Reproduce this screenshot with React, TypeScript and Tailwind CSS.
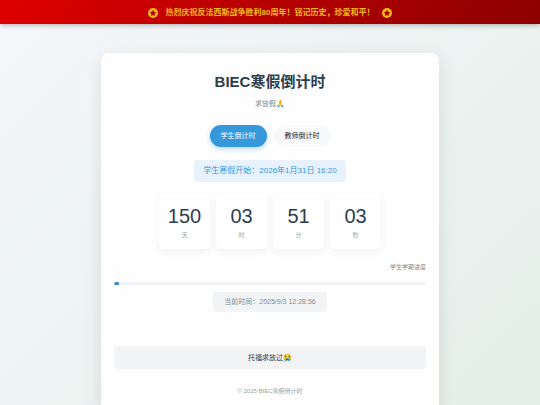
import { useState } from "react";

const TABS = [
  { id: "student", label: "学生倒计时" },
  { id: "teacher", label: "教师倒计时" },
];

const UNITS = [
  { value: "150", label: "天" },
  { value: "03", label: "时" },
  { value: "51", label: "分" },
  { value: "03", label: "秒" },
];

const PROGRESS = 1.5;

function StarBadge() {
  return (
    <svg viewBox="0 0 24 24" className="size-[10px] shrink-0" aria-hidden="true">
      <circle cx="12" cy="12" r="12" fill="#f8b91c" />
      <path
        d="M12 4.2l2.4 5 5.5.7-4 3.8 1 5.5-4.9-2.7-4.9 2.7 1-5.5-4-3.8 5.5-.7z"
        fill="#b00000"
      />
    </svg>
  );
}

function Banner() {
  return (
    <header className="relative flex items-center justify-center gap-2 bg-linear-135 from-[#e00000] to-[#8b0000] pt-[7px] pb-[5px] text-[8px] leading-3 font-bold text-[#f8b91c] shadow-[0_1px_5px_rgba(0,0,0,0.3)]">
      <StarBadge />
      <span>热烈庆祝反法西斯战争胜利80周年！铭记历史，珍爱和平！</span>
      <StarBadge />
    </header>
  );
}

export default function App() {
  const [active, setActive] = useState("student");

  return (
    <div className="min-h-screen bg-linear-135 from-[#f5f7fa] to-[#e4efe9] font-['Liberation_Sans','Noto_Sans_CJK_SC',sans-serif] text-[#2c3e50]">
      <Banner />
      <div className="flex justify-center pt-[29px]">
        <main className="flex w-full max-w-[338px] flex-col items-center rounded-lg bg-[#fefefe] px-[13px] pt-[19px] pb-5 shadow-[0_5px_18px_rgba(0,0,0,0.1)]">
          <h1 className="text-[15px] leading-5 font-bold">BIEC寒假倒计时</h1>
          <p className="mt-[7px] text-[7px] leading-[10px] text-[#7f8c8d]">求放假🙏</p>

          <div className="mt-4 flex gap-[7px]">
            {TABS.map((tab) => (
              <button
                key={tab.id}
                type="button"
                onClick={() => setActive(tab.id)}
                className={
                  active === tab.id
                    ? "h-[22px] rounded-full bg-[#3498db] px-[11px] text-[7px] text-white shadow-[0_2px_5px_rgba(52,152,219,0.35)]"
                    : "h-[22px] rounded-full bg-[#f8f9fa] px-[11px] text-[7px] text-[#222222]"
                }
              >
                {tab.label}
              </button>
            ))}
          </div>

          <p className="mt-[13px] rounded-[4px] bg-[#e8f2fc] px-[9px] py-[5px] text-[8px] leading-3 text-[#3498db]">
            学生寒假开始：2026年1月31日 16:20
          </p>

          <div className="mt-3 grid grid-cols-4 gap-[6px]">
            {UNITS.map((unit) => (
              <div
                key={unit.label}
                className="flex w-[51px] flex-col items-center rounded-[5px] bg-white pt-[10px] pb-[9px] shadow-[0_3px_8px_rgba(0,0,0,0.05)]"
              >
                <span className="text-[20px] leading-6">{unit.value}</span>
                <span className="mt-[2px] text-[6px] leading-[10px] text-[#95a5a6]">{unit.label}</span>
              </div>
            ))}
          </div>

          <p className="mt-[13px] self-end text-[6px] leading-[10px] text-[#7f8c8d]">学生学期进度</p>
          <div className="mt-[10px] h-[3px] w-full overflow-hidden rounded-full bg-[#f1f2f5]">
            <div className="h-full rounded-full bg-[#2f8bc9]" style={{ width: `${PROGRESS}%` }} />
          </div>

          <p className="mt-[7px] rounded-[4px] bg-[#f3f4f6] px-[11px] py-1 text-[7px] leading-3 text-[#7f8c8d]">
            当前时间：2025/9/3 12:28:56
          </p>

          <p className="mt-[34px] w-full rounded-[4px] bg-[#f1f3f5] py-[6px] text-center text-[7px] leading-[11px]">
            托福求放过😭
          </p>

          <footer className="mt-[17px] text-[6px] leading-[10px] text-[#95a5a6]">© 2025 BIEC寒假倒计时</footer>
        </main>
      </div>
    </div>
  );
}
